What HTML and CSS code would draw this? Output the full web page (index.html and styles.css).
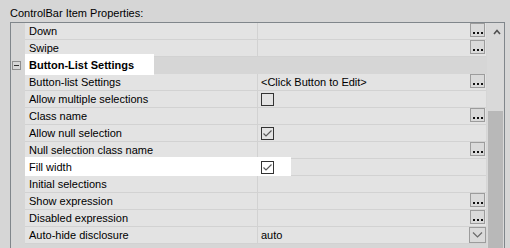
FILE: index.html
```html
<!DOCTYPE html>
<html lang="en">
<head>
    <meta charset="UTF-8">
    <title>ControlBar Item Properties</title>
    <link rel="stylesheet" href="styles.css">
</head>
<body>

    <!-- title -->
    <div class="title">ControlBar Item Properties:</div>

    <!-- property grid -->
    <div class="grid">
        <div class="rows">
            <div class="row">
                <div class="gutter"></div>
                <div class="name"><span>Down</span></div>
                <div class="value"><span></span><button class="dots"><i></i><i></i><i></i></button></div>
            </div>
            <div class="row">
                <div class="gutter"></div>
                <div class="name"><span>Swipe</span></div>
                <div class="value"><span></span><button class="dots"><i></i><i></i><i></i></button></div>
            </div>
            <div class="row section">
                <div class="gutter"><span class="minus"></span></div>
                <div class="name"><span>Button-List Settings</span></div>
                <div class="hl hl-section"></div>
            </div>
            <div class="row">
                <div class="gutter"></div>
                <div class="name"><span>Button-list Settings</span></div>
                <div class="value"><span>&lt;Click Button to Edit&gt;</span><button class="dots"><i></i><i></i><i></i></button></div>
            </div>
            <div class="row">
                <div class="gutter"></div>
                <div class="name"><span>Allow multiple selections</span></div>
                <div class="value"><span class="check"></span></div>
            </div>
            <div class="row">
                <div class="gutter"></div>
                <div class="name"><span>Class name</span></div>
                <div class="value"><span></span><button class="dots"><i></i><i></i><i></i></button></div>
            </div>
            <div class="row">
                <div class="gutter"></div>
                <div class="name"><span>Allow null selection</span></div>
                <div class="value"><span class="check checked"><svg width="11" height="11" viewBox="0 0 11 11"><path d="M1.5 5.5 L4 8 L9.5 2.5" fill="none" stroke="#5a5a5a" stroke-width="1.2"/></svg></span></div>
            </div>
            <div class="row">
                <div class="gutter"></div>
                <div class="name"><span>Null selection class name</span></div>
                <div class="value"><span></span><button class="dots"><i></i><i></i><i></i></button></div>
            </div>
            <div class="row">
                <div class="gutter"></div>
                <div class="name"><span>Fill width</span></div>
                <div class="value"><span class="check checked"><svg width="11" height="11" viewBox="0 0 11 11"><path d="M1.5 5.5 L4 8 L9.5 2.5" fill="none" stroke="#5a5a5a" stroke-width="1.2"/></svg></span></div>
                <div class="hl hl-row"></div>
            </div>
            <div class="row">
                <div class="gutter"></div>
                <div class="name"><span>Initial selections</span></div>
                <div class="value"></div>
            </div>
            <div class="row">
                <div class="gutter"></div>
                <div class="name"><span>Show expression</span></div>
                <div class="value"><span></span><button class="dots"><i></i><i></i><i></i></button></div>
            </div>
            <div class="row">
                <div class="gutter"></div>
                <div class="name"><span>Disabled expression</span></div>
                <div class="value"><span></span><button class="dots"><i></i><i></i><i></i></button></div>
            </div>
            <div class="row">
                <div class="gutter"></div>
                <div class="name"><span>Auto-hide disclosure</span></div>
                <div class="value"><span>auto</span><button class="drop"><svg width="11" height="6" viewBox="0 0 11 6"><path d="M1 0.5 L5.5 5 L10 0.5" fill="none" stroke="#6a6a6a" stroke-width="1.2"/></svg></button></div>
            </div>
            <div class="row section">
                <div class="gutter"><span class="minus"></span></div>
                <div class="name"><span>Data Binding</span></div>
            </div>
        </div>

        <!-- scrollbar -->
        <div class="scrollbar">
            <div class="arrow"><svg width="8" height="6" viewBox="0 0 8 6"><path d="M1 5 L4 1.5 L7 5" fill="none" stroke="#505050" stroke-width="1.6"/></svg></div>
            <div class="thumb"></div>
        </div>
    </div>

</body>
</html>
```

FILE: styles.css
```css
body {
    margin: 0;
    background-color: #d6d6d6;
    font-family: "Liberation Sans", Arial, sans-serif;
    font-size: 11px;
    color: #000;
    height: 248px;
    overflow: hidden;
}
/* title */
.title {
    height: 22px;
    line-height: 26px;
    padding-left: 10px;
}
/* property grid frame */
.grid {
    display: flex;
    margin-left: 10px;
    width: 493px;
    height: 225px;
    border: 1px solid #80868b;
    border-bottom: none;
    overflow: hidden;
}
.rows {
    width: 476px;
}
.row {
    display: flex;
    height: 17px;
    position: relative;
}
.gutter {
    width: 14px;
    flex-shrink: 0;
}
.name {
    width: 233px;
    height: 16px;
    line-height: 16px;
    padding-left: 4px;
    box-sizing: border-box;
    width: 233px;
    background-color: #e3e3e3;
    border-bottom: 1px solid #d2d2d2;
    border-right: 1px solid #d2d2d2;
}
.value {
    display: flex;
    align-items: flex-start;
    justify-content: space-between;
    width: 228px;
    height: 16px;
    line-height: 16px;
    padding-left: 3px;
    box-sizing: border-box;
    background-color: #e3e3e3;
    border-bottom: 1px solid #d2d2d2;
}
.name,
.value {
    height: 17px;
}
.name > *,
.value > * {
    position: relative;
    z-index: 2;
}
/* section header */
.section .name {
    width: 462px;
    background: none;
    border: none;
    font-weight: bold;
    line-height: 17px;
}
.minus {
    display: block;
    width: 7px;
    height: 7px;
    margin: 4px 0 0 1px;
    border: 1px solid #8e8e8e;
    position: relative;
}
.minus::after {
    content: "";
    position: absolute;
    left: 1px;
    top: 3px;
    width: 5px;
    height: 1px;
    background-color: #333;
}
/* white highlights */
.hl {
    position: absolute;
    background-color: #fff;
    z-index: 1;
}
.hl-section {
    left: 14px;
    top: -3px;
    width: 129px;
    height: 21px;
}
.hl-row {
    left: 14px;
    top: -2px;
    width: 266px;
    height: 19px;
}
/* ellipsis buttons */
.dots {
    display: flex;
    align-items: flex-end;
    justify-content: center;
    gap: 2px;
    width: 15px;
    height: 14px;
    margin: 0 1px 0 0;
    padding: 0 0 2px 0;
    background-color: #dadada;
    border: 1px solid #9c9c9c;
    box-sizing: border-box;
}
.dots i {
    width: 2px;
    height: 2px;
    background-color: #111;
}
.drop {
    display: flex;
    align-items: center;
    justify-content: center;
    width: 17px;
    height: 16px;
    padding: 0;
    background-color: #dadada;
    border: 1px solid #9c9c9c;
    box-sizing: border-box;
}
/* checkbox */
.check {
    display: block;
    width: 13px;
    height: 13px;
    margin-top: 2px;
    border: 1px solid #333;
    box-sizing: border-box;
}
.check svg {
    display: block;
}
/* scrollbar */
.scrollbar {
    width: 17px;
    background-color: #d9d9d9;
    display: flex;
    flex-direction: column;
    align-items: center;
}
.arrow {
    height: 17px;
    display: flex;
    align-items: center;
    justify-content: center;
    padding-left: 2px;
}
.thumb {
    width: 15px;
    margin-top: 71px;
    flex: 1;
    background-color: #b8b8b8;
}
```
